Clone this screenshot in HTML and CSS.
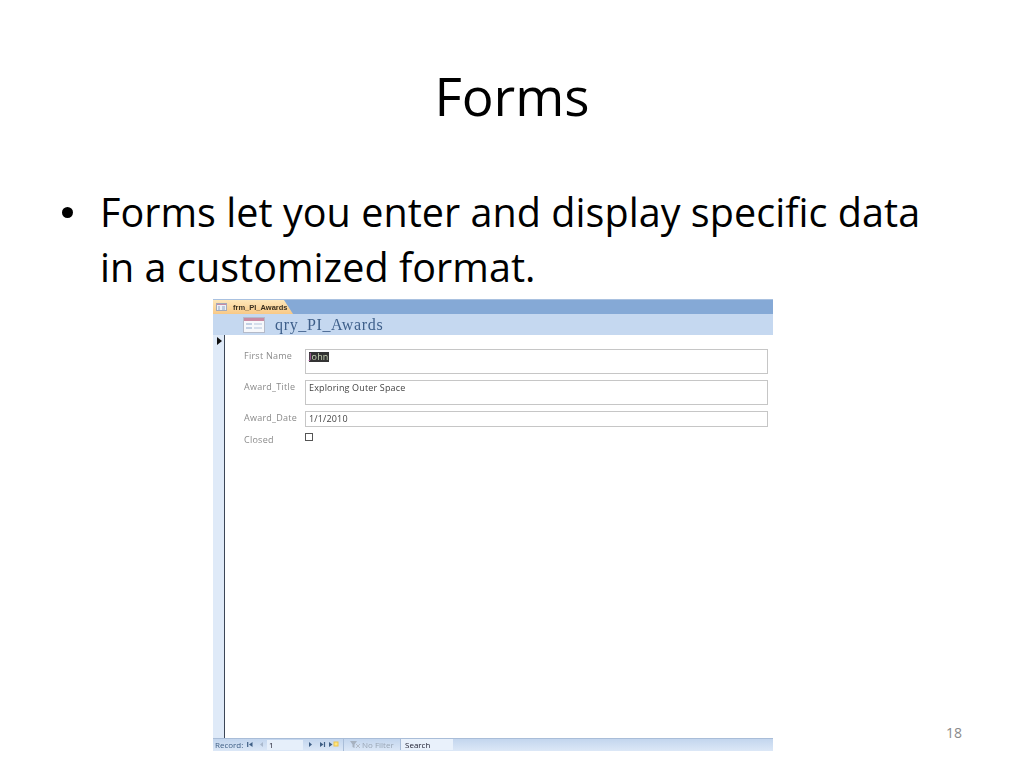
FILE: index.html
```html
<!DOCTYPE html>
<html lang="en">
<head>
<meta charset="utf-8">
<title>Forms</title>
<link rel="stylesheet" href="styles.css">
</head>
<body>
<main class="slide">
  <h1 class="title">Forms</h1>
  <ul class="bullets">
    <li>Forms let you enter and display specific data in a customized format.</li>
  </ul>
  <div class="stage">
    <section class="window">
      <div class="tabstrip">
        <div class="tab">
          <svg class="tab-icon" width="11" height="8" viewBox="0 0 11 8"><rect x="0.5" y="0.5" width="10" height="7" fill="#eef2f8" stroke="#a3a9bb"/><rect x="1" y="1" width="9" height="1" fill="#c88aa4"/><path d="M2 4h2M2 6h2M6 4h3M6 6h3" stroke="#8ea3c4"/></svg>
          <span class="tab-label">frm_PI_Awards</span>
        </div>
      </div>
      <header class="formhead">
        <svg class="head-icon" width="22" height="16" viewBox="0 0 22 16"><rect x="0.5" y="0.5" width="21" height="15" fill="#f7f8fb" stroke="#b4bac9"/><rect x="1" y="1" width="20" height="3" fill="#c98aa3"/><path d="M3 7h6M3 11h6" stroke="#c2d0e4" stroke-width="2"/><path d="M11 7h8M11 11h8" stroke="#d5deec" stroke-width="2"/></svg>
        <span class="head-title">qry_PI_Awards</span>
      </header>
      <div class="formbody">
        <aside class="selector"><span class="arrow"></span></aside>
        <div class="fields">
          <div class="row">
            <span class="label">First Name</span>
            <div class="box tall"><span class="selected"><span class="caret">J</span>ohn</span></div>
          </div>
          <div class="row">
            <span class="label">Award_Title</span>
            <div class="box tall">Exploring Outer Space</div>
          </div>
          <div class="row">
            <span class="label">Award_Date</span>
            <div class="box short">1/1/2010</div>
          </div>
          <div class="row">
            <span class="label">Closed</span>
            <span class="checkbox"></span>
          </div>
        </div>
      </div>
      <footer class="navbar">
        <span class="nav-label">Record:</span>
        <svg class="nav-icon first" width="6" height="7" viewBox="0 0 6 7"><path d="M0.700 1v5" stroke="#3f5f85" stroke-width="1.200"/><path d="M5.500 1v5L2 3.500z" fill="#3f5f85"/></svg>
        <svg class="nav-icon prev" width="5" height="7" viewBox="0 0 5 7"><path d="M4 1v5L1 3.500z" fill="#a9b8cc"/></svg>
        <span class="nav-current">1</span>
        <svg class="nav-icon next" width="5" height="7" viewBox="0 0 5 7"><path d="M1 1v5l3-2.500z" fill="#3f5f85"/></svg>
        <svg class="nav-icon last" width="7" height="7" viewBox="0 0 7 7"><path d="M1 1v5l3.500-2.500z" fill="#3f5f85"/><path d="M5.500 1v5" stroke="#3f5f85" stroke-width="1.200"/></svg>
        <svg class="nav-icon new" width="10" height="7" viewBox="0 0 10 7"><path d="M0 1v5l3.500-2.500z" fill="#3f5f85"/><rect x="5" y="1" width="4" height="4" fill="#ffe680" stroke="#ecc44e"/></svg>
        <span class="nav-sep"></span>
        <svg class="nav-icon funnel" width="11" height="9" viewBox="0 0 11 9"><path d="M0 1h7L4.500 4.500V8L2.500 7V4.500z" fill="#a7b2c0"/><path d="M6 4l4 4M10 4L6 8" stroke="#b4bcc8"/></svg>
        <span class="nav-filter">No Filter</span>
        <span class="nav-search">Search</span>
      </footer>
    </section>
    <span class="pagenum">18</span>
  </div>
</main>
</body>
</html>
```

FILE: styles.css
```css
html, body {
  margin: 0;
  padding: 0;
  background: #fff;
}
.slide {
  width: 1024px;
  height: 768px;
  overflow: hidden;
  display: flex;
  flex-direction: column;
  font-family: "Open Sans", "Noto Sans", sans-serif;
  font-variant-ligatures: none;
  color: #000;
}
.title {
  margin: 0;
  height: 185px;
  padding-top: 60px;
  box-sizing: border-box;
  font-size: 53px;
  line-height: 72px;
  font-weight: 400;
  text-align: center;
}
.bullets {
  margin: 0;
  padding: 0 90px 0 100px;
  height: 114px;
  list-style: none;
  font-size: 39.5px;
  letter-spacing: 0.05px;
  line-height: 55px;
}
.bullets li {
  position: relative;
}
.bullets li::before {
  content: "";
  position: absolute;
  left: -38px;
  top: 22px;
  width: 11px;
  height: 11px;
  border-radius: 50%;
  background: #000;
}
.stage {
  display: flex;
  align-items: flex-end;
  padding-left: 213px;
  height: 452px;
}
.window {
  width: 560px;
  height: 452px;
  display: flex;
  flex-direction: column;
  filter: blur(0.35px);
}
.tabstrip {
  height: 15px;
  flex: none;
  background: #85a9d6;
  border-top: 1px solid #a9c1e0;
  box-sizing: border-box;
  display: flex;
}
.tab {
  width: 80px;
  display: flex;
  align-items: center;
  gap: 6px;
  padding-left: 3px;
  box-sizing: border-box;
  background: linear-gradient(#fde6b8, #f8c987);
  clip-path: polygon(0 0, 71px 0, 100% 100%, 0 100%);
}
.tab-label {
  font-family: "Liberation Sans", sans-serif;
  font-size: 7.5px;
  font-weight: 700;
  color: #3a3020;
}
.formhead {
  height: 21px;
  flex: none;
  background: #c5d8f0;
  display: flex;
  align-items: center;
  padding-left: 30px;
  gap: 10px;
}
.head-title {
  font-family: "Liberation Serif", serif;
  font-size: 16px;
  letter-spacing: 0.65px;
  color: #3e5f8a;
}
.formbody {
  flex: 1;
  display: flex;
  min-height: 0;
}
.selector {
  width: 7px;
  background: #dfeaf8;
  border-right: 1px solid #3c4656;
  padding: 2px 0 0 4px;
}
.arrow {
  display: block;
  width: 0;
  height: 0;
  border-top: 4px solid transparent;
  border-bottom: 4px solid transparent;
  border-left: 5px solid #111;
}
.fields {
  flex: 1;
  padding: 14px 5px 0 19px;
  display: flex;
  flex-direction: column;
  gap: 6px;
  font-size: 9px;
}
.row {
  display: flex;
  align-items: flex-start;
}
.label {
  width: 61px;
  flex: none;
  padding-top: 1px;
  color: #8a8a8a;
  line-height: 12px;
  letter-spacing: 0.25px;
}
.box {
  flex: 1;
  border: 1px solid #c6c6c6;
  box-sizing: border-box;
  padding: 1px 3px;
  color: #444;
  line-height: 11px;
  letter-spacing: 0.15px;
}
.tall {
  height: 25px;
}
.short {
  height: 16px;
}
.selected {
  display: inline-block;
  width: 20px;
  background: #333;
  color: #cdd8b8;
  line-height: 10px;
}
.caret {
  color: #d070c0;
}
.checkbox {
  width: 8px;
  height: 8px;
  box-sizing: border-box;
  border: 1px solid #555;
  background: #fff;
}
.navbar {
  height: 13px;
  flex: none;
  background: linear-gradient(#c3d6ee, #dce8f7);
  border-top: 1px solid #a9bdd8;
  box-sizing: border-box;
  display: flex;
  align-items: center;
  padding: 0 0 1px 2px;
  font-size: 8px;
  color: #3f5f85;
}
.nav-label {
  width: 32px;
}
.nav-icon {
  flex: none;
}
.prev {
  margin-left: 6px;
}
.nav-current {
  width: 36px;
  height: 10px;
  line-height: 10px;
  margin-left: 3px;
  padding-left: 2px;
  box-sizing: border-box;
  background: #e6effa;
  color: #223;
}
.next {
  margin-left: 5px;
}
.last {
  margin-left: 6px;
}
.new {
  margin-left: 3px;
}
.nav-sep {
  width: 1px;
  height: 12px;
  background: #a9bdd8;
  margin: 0 6px 0 4px;
}
.funnel {
  margin-right: 1px;
}
.nav-filter {
  width: 37px;
  color: #9aa6b5;
}
.nav-search {
  width: 53px;
  height: 11px;
  line-height: 11px;
  margin-left: 1px;
  padding-left: 4px;
  box-sizing: border-box;
  background: #e9f1fb;
  border-left: 1px solid #a9bdd8;
  color: #223;
}
.pagenum {
  margin-left: auto;
  margin-right: 62px;
  padding-bottom: 9px;
  font-size: 14px;
  line-height: 19px;
  color: #8a8a8a;
}
```
